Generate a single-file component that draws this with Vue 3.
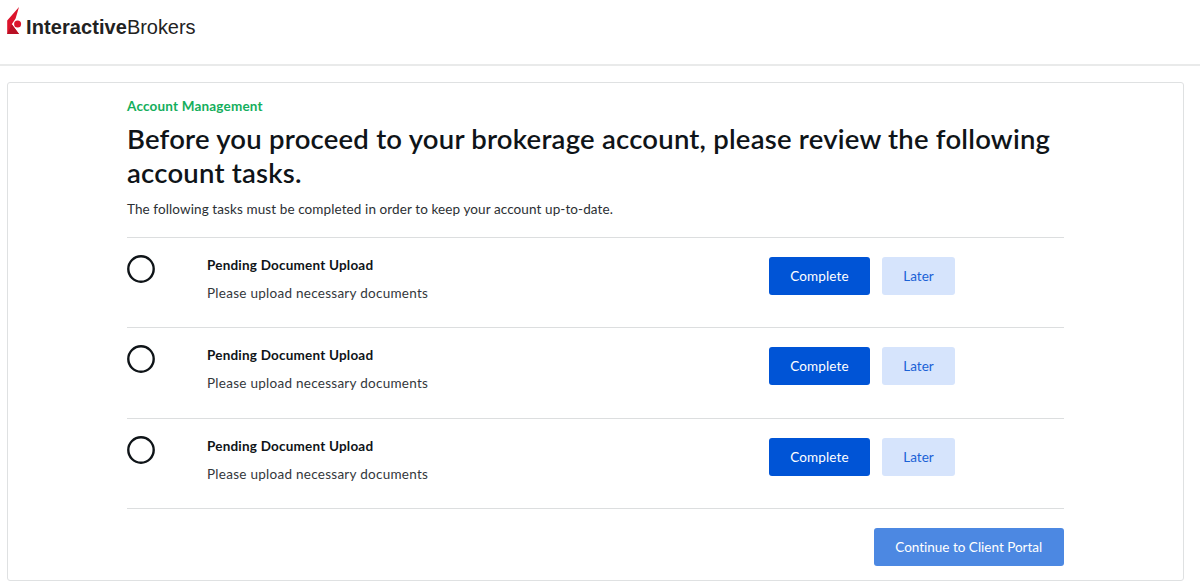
<script setup>
import { ref } from 'vue';

const tasks = ref([
  { id: 1, title: 'Pending Document Upload', text: 'Please upload necessary documents' },
  { id: 2, title: 'Pending Document Upload', text: 'Please upload necessary documents' },
  { id: 3, title: 'Pending Document Upload', text: 'Please upload necessary documents' }
]);
</script>

<template>
  <div class="page">
    <header class="header">
      <svg class="logo-mark" width="15" height="28" viewBox="0 0 15 28">
        <path d="M12 0 L0.2 13.5 V27 H12 L4.8 17.3 L8.6 11.5 Z" fill="#dc142c" />
        <path d="M4.8 17.3 L0.2 27 H12 Z" fill="#b81024" />
        <circle cx="10.6" cy="17" r="3.5" fill="#dc142c" />
      </svg>
      <span class="logo-text"><b>Interactive</b>Brokers</span>
    </header>

    <main class="card">
      <p class="section">Account Management</p>
      <h1>Before you proceed to your brokerage account, please review the following account tasks.</h1>
      <p class="intro">The following tasks must be completed in order to keep your account up-to-date.</p>

      <ul class="tasks">
        <li v-for="task in tasks" :key="task.id" class="task">
          <svg class="circle" width="28" height="28" viewBox="0 0 28 28">
            <circle cx="14" cy="14" r="12.7" fill="none" stroke="#0f1418" stroke-width="2.4" />
          </svg>
          <div class="info">
            <h2>{{ task.title }}</h2>
            <p>{{ task.text }}</p>
          </div>
          <div class="actions">
            <button class="btn primary">Complete</button>
            <button class="btn secondary">Later</button>
          </div>
        </li>
      </ul>

      <div class="footer">
        <button class="btn continue">Continue to Client Portal</button>
      </div>
    </main>
  </div>
</template>

<style>
body {
  background: #fff;
}
</style>

<style scoped>
.page {
  height: 587px;
  overflow: hidden;
  font-family: Lato, sans-serif;
  font-variant-ligatures: none;
  color: #0f1418;
}

.header {
  display: flex;
  box-sizing: border-box;
  height: 66px;
  padding: 7px 0 0 7px;
  border-bottom: 2px solid #e9eaea;
}

.logo-text {
  padding: 9px 0 0 4px;
  font-family: "Liberation Sans", Arial, sans-serif;
  font-size: 20px;
  line-height: 23px;
  letter-spacing: -0.05px;
  color: #222;
}

.logo-text b {
  letter-spacing: 0.08px;
}

.card {
  box-sizing: border-box;
  width: 1177px;
  height: 499px;
  margin: 16px 0 0 7px;
  padding: 15px 119.5px 0 119px;
  border: 1px solid #dfe1e2;
  border-radius: 3px;
}

.section {
  margin: 0;
  font-size: 13.5px;
  font-weight: 700;
  line-height: 16px;
  letter-spacing: 0.19px;
  color: #14ae5c;
}

h1 {
  margin: 8px 0 0;
  font-size: 27.5px;
  font-weight: 600;
  line-height: 34.4px;
  letter-spacing: 0.22px;
}

.intro {
  margin: 10px 0 0;
  font-size: 13.5px;
  line-height: 16px;
  letter-spacing: 0.1px;
  color: #2b2f33;
}

.tasks {
  margin: 20.2px 0 0;
  padding: 0;
  list-style: none;
  border-bottom: 1px solid #dcdedf;
}

.task {
  display: flex;
  box-sizing: border-box;
  height: 90.3px;
  padding-top: 17px;
  border-top: 1px solid #dcdedf;
}

.circle {
  flex: none;
}

.info {
  width: 562px;
  padding: 2px 0 0 52px;
}

h2 {
  margin: 0;
  font-size: 13.5px;
  font-weight: 700;
  line-height: 16px;
  letter-spacing: 0.21px;
}

.info p {
  margin: 12px 0 0;
  font-size: 13.5px;
  line-height: 16px;
  letter-spacing: 0.27px;
  color: #33373b;
}

.actions {
  display: flex;
  gap: 12px;
  padding-top: 2px;
}

.btn {
  height: 38px;
  padding: 0;
  border: 0;
  border-radius: 3px;
  font-family: inherit;
  font-size: 13.5px;
  font-variant-ligatures: none;
  color: #fff;
}

.primary {
  width: 101px;
  background: #0054d6;
  letter-spacing: 0.13px;
}

.secondary {
  width: 73px;
  background: #d6e4fc;
  letter-spacing: 0.05px;
  color: #1a62d6;
}

.footer {
  display: flex;
  justify-content: flex-end;
  padding-top: 18.7px;
}

.continue {
  width: 189.5px;
  background: #4c88e2;
}
</style>
